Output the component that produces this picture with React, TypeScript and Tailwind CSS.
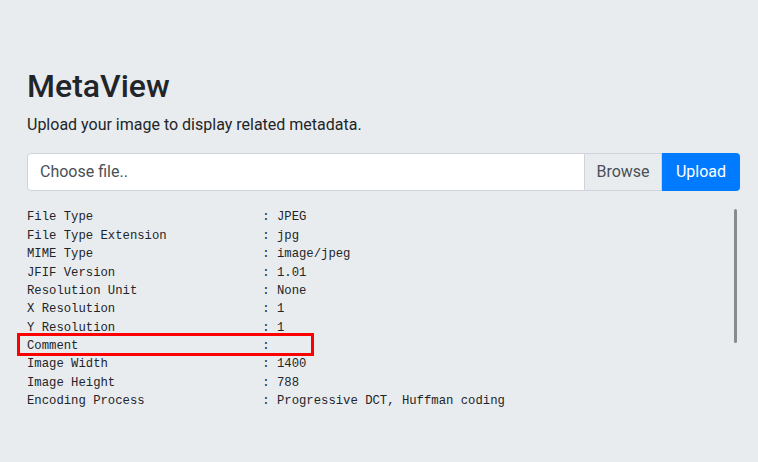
import React from 'react';

const rows: [string, string][] = [
  ['File Type', 'JPEG'],
  ['File Type Extension', 'jpg'],
  ['MIME Type', 'image/jpeg'],
  ['JFIF Version', '1.01'],
  ['Resolution Unit', 'None'],
  ['X Resolution', '1'],
  ['Y Resolution', '1'],
  ['Comment', ''],
  ['Image Width', '1400'],
  ['Image Height', '788'],
  ['Encoding Process', 'Progressive DCT, Huffman coding'],
  ['Bits Per Sample', '8'],
  ['Color Components', '3'],
];

// exiftool style: label padded to 32 chars, then ": value"
const text = rows.map(([k, v]) => `${k.padEnd(32, ' ')}: ${v}`).join('\n');

export default function App() {
  return (
    <div
      className="min-h-[462px] bg-[#e9ecef] text-[#212529] pl-[27px] pr-[18px] pt-[67px]"
      style={{ fontFamily: 'Roboto, "Liberation Sans", sans-serif' }}
    >
      <h1 className="text-[32px] leading-[1.2] font-medium mb-2">MetaView</h1>
      <p className="text-base leading-6 mb-4">Upload your image to display related metadata.</p>

      <div className="flex h-[38px] text-base">
        <div className="flex-1 flex items-center bg-white border border-[#ced4da] rounded-l px-3 text-[#495057]">
          Choose file..
        </div>
        <div className="w-[77px] flex items-center justify-center bg-[#e9ecef] border border-l-0 border-[#ced4da] text-[#495057]">
          Browse
        </div>
        <button className="w-[78px] flex items-center justify-center bg-[#007bff] text-white rounded-r">Upload</button>
      </div>

      <div className="relative mt-[17px]">
        <pre
          className="h-[202px] overflow-hidden text-[12.25px] leading-[1.5] text-[#212529]"
          style={{ fontFamily: '"Liberation Mono", monospace' }}
        >
          {text}
        </pre>
        <div className="absolute right-[3px] top-[1px] w-[3px] h-[134px] rounded-full bg-[#8a8a8a]" />
        <div className="absolute left-[-10px] top-[125px] w-[297px] h-[23px] border-[3px] border-[#ff0000]" />
      </div>
    </div>
  );
}
